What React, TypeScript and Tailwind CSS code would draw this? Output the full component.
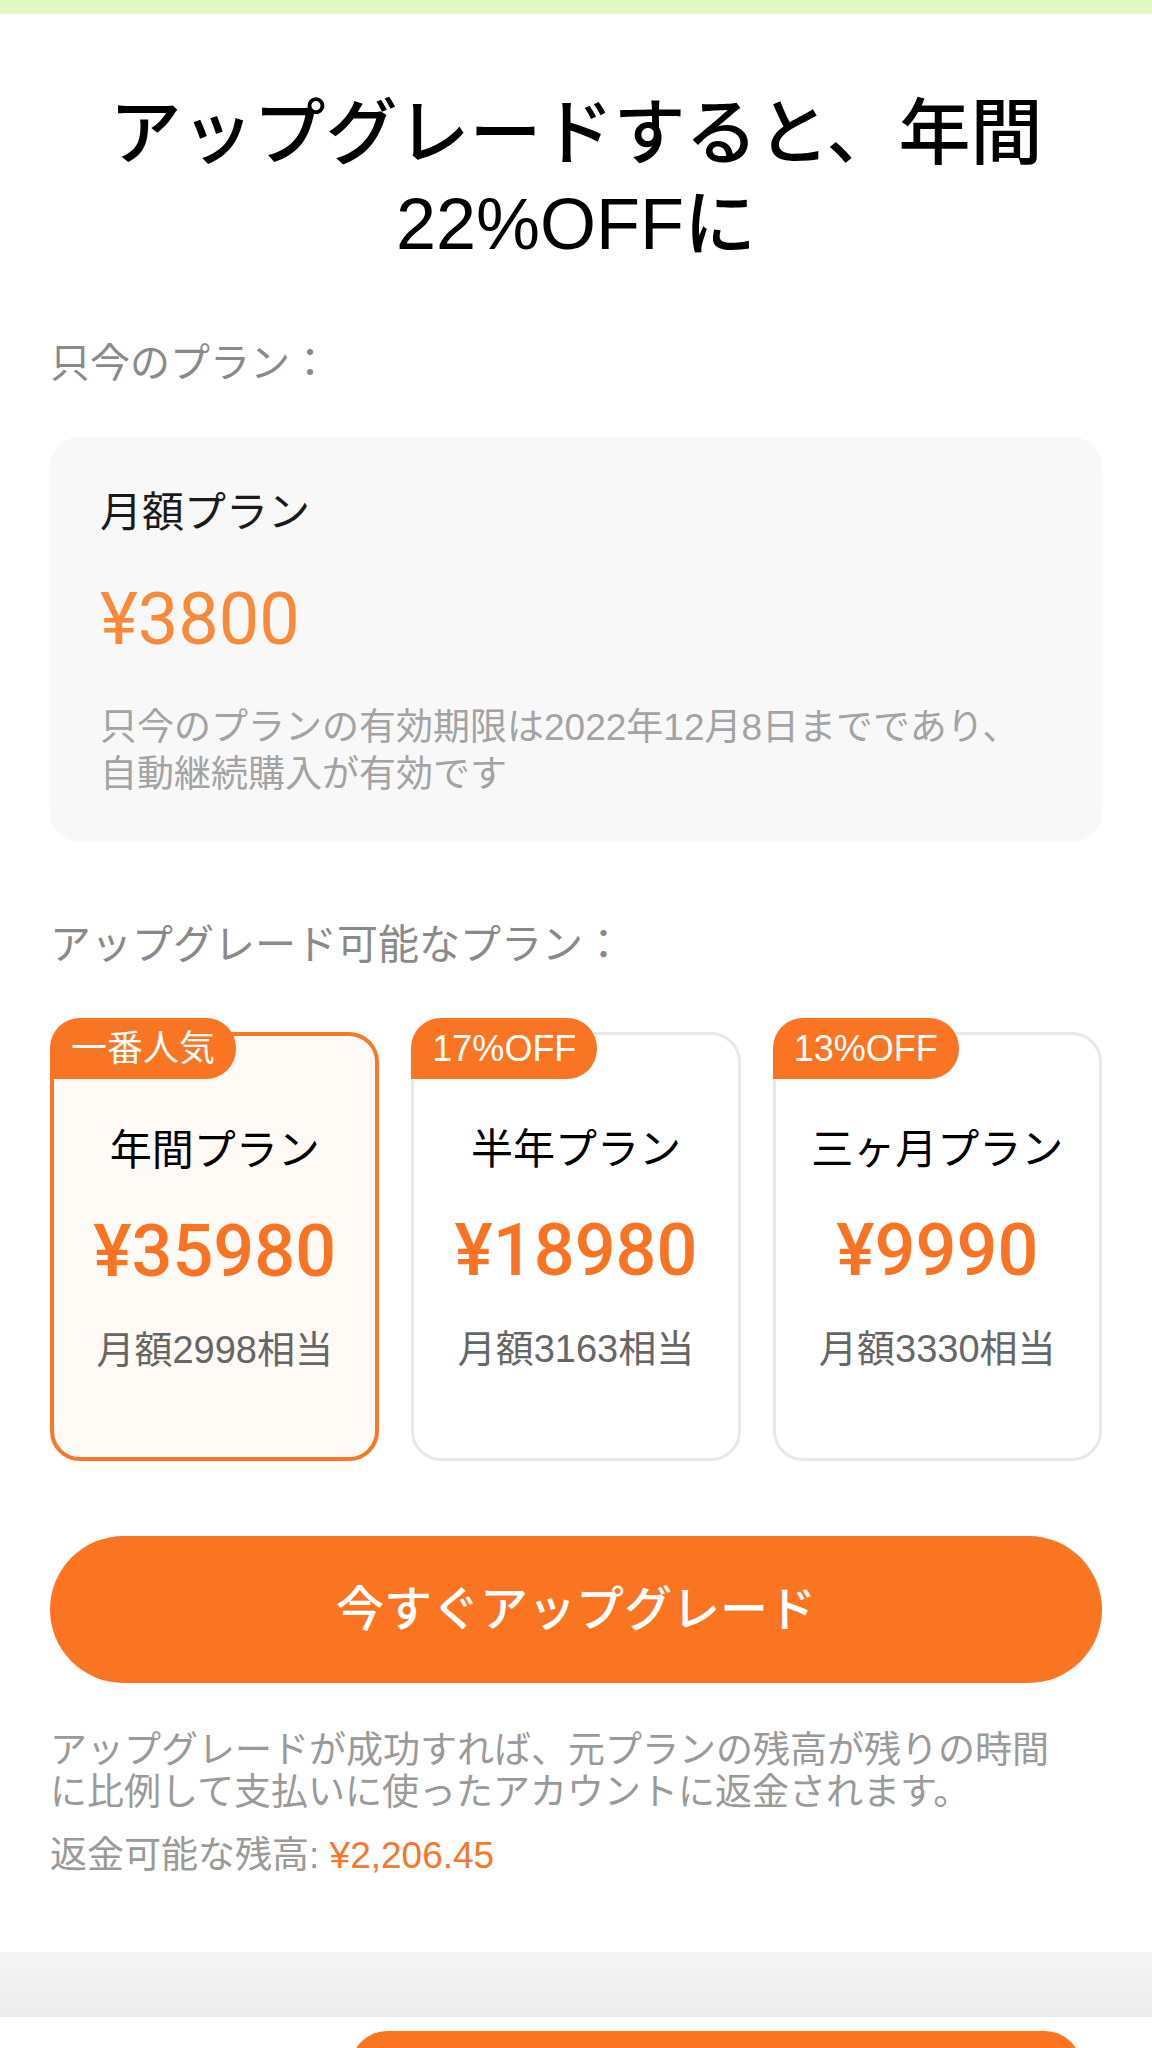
import { clsx } from "clsx";

interface Plan {
  badge: string;
  name: string;
  price: string;
  monthly: string;
  selected?: boolean;
}

const plans: Plan[] = [
  { badge: "一番人気", name: "年間プラン", price: "¥35980", monthly: "月額2998相当", selected: true },
  { badge: "17%OFF", name: "半年プラン", price: "¥18980", monthly: "月額3163相当" },
  { badge: "13%OFF", name: "三ヶ月プラン", price: "¥9990", monthly: "月額3330相当" },
];

function PlanCard({ plan }: { plan: Plan }) {
  return (
    <div className="relative pt-[14px]">
      <div
        className={clsx(
          "flex h-[429px] flex-col items-center rounded-[30px] pt-[87px]",
          plan.selected
            ? "border-4 border-[#f7782b] bg-[#fffaf5]"
            : "border-[3px] border-[#e8e8e8] bg-white"
        )}
      >
        <p className="text-[42px] leading-[56px] text-black">{plan.name}</p>
        <p className="mt-[31px] font-['Roboto','Noto_Sans_CJK_JP',sans-serif] text-[72px] font-medium leading-[84px] text-[#f87323]">
          {plan.price}
        </p>
        <p className="mt-[31px] text-[38px] leading-[50px] text-[#666666]">{plan.monthly}</p>
      </div>

      {/* Badge */}
      <span className="absolute left-0 top-0 h-[61px] rounded-tl-[30px] rounded-r-[30px] bg-[#f97524] px-[21px] text-[36px] leading-[61px] text-white">
        {plan.badge}
      </span>
    </div>
  );
}

export default function App() {
  return (
    <div className="h-[2048px] overflow-hidden bg-white font-['Liberation_Sans','Noto_Sans_CJK_JP',sans-serif]">
      <div className="h-[14px] bg-[#e1f8c3]" />

      <main className="px-[50px]">
        <h1 className="mt-[74px] text-center text-[72px] font-medium leading-[91px] text-black">
          アップグレードすると、年間
          <br />
          22%OFFに
        </h1>

        <p className="mt-[65px] text-[40px] leading-[56px] text-[#8a8a8a]">只今のプラン：</p>

        {/* Current plan */}
        <section className="mt-[46px] rounded-[30px] bg-[#f8f8f8] px-[50px] pb-[44px] pt-[48px]">
          <p className="text-[42px] leading-[56px] text-[#1a1a1a]">月額プラン</p>
          <p className="mt-[39px] font-['Roboto','Noto_Sans_CJK_JP',sans-serif] text-[72px] leading-[80px] text-[#fa8a3a]">
            ¥3800
          </p>
          <p className="mt-[44px] text-[37px] leading-[47px] text-[#a3a3a3]">
            只今のプランの有効期限は2022年12月8日までであり、
            <br />
            自動継続購入が有効です
          </p>
        </section>

        <p className="mt-[75px] text-[41px] leading-[56px] text-[#8a8a8a]">
          アップグレード可能なプラン：
        </p>

        {/* Upgrade plans */}
        <div className="mt-[45px] grid grid-cols-3 gap-[32px]">
          {plans.map((p) => (
            <PlanCard key={p.name} plan={p} />
          ))}
        </div>

        <button className="mt-[75px] flex h-[147px] w-full items-center justify-center rounded-full bg-[#fa7422] text-[48px] font-medium text-white">
          今すぐアップグレード
        </button>

        <p className="mt-[47px] text-[37px] leading-[42px] text-[#9a9a9a]">
          アップグレードが成功すれば、元プランの残高が残りの時間
          <br />
          に比例して支払いに使ったアカウントに返金されます。
        </p>
        <p className="mt-[21px] text-[37px] leading-[42px] text-[#9a9a9a]">
          返金可能な残高: <span className="text-[#f4772b]">¥2,206.45</span>
        </p>
      </main>

      {/* Bottom bar */}
      <div className="mt-[75px] h-[65px] bg-linear-to-b from-[#f5f5f5] to-[#ececec]" />
      <div className="pt-[14px]">
        <div className="ml-[351px] h-[100px] w-[730px] rounded-[36px] bg-[#fa7422]" />
      </div>
    </div>
  );
}
